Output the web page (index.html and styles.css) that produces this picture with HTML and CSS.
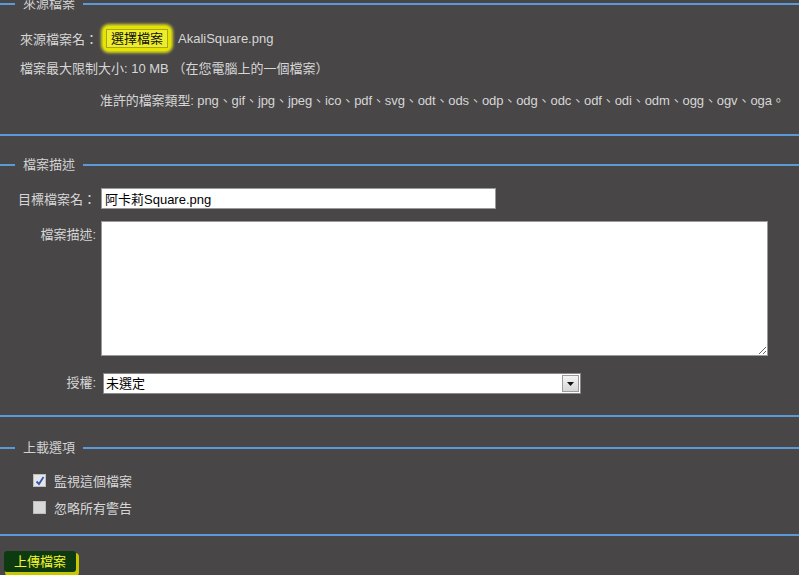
FILE: index.html
```html
<!DOCTYPE html>
<html lang="zh-Hant">
  <head>
    <meta charset="UTF-8">
    <title>上傳檔案</title>
    <link rel="stylesheet" href="styles.css">
  </head>
  <body>
    <div class="page">

      <fieldset class="box box-source">
        <legend>來源檔案</legend>
        <div class="row row-file">
          <span class="lbl">來源檔案名：</span>
          <span class="marker"><span class="pick">選擇檔案</span></span>
          <span class="fname">AkaliSquare.png</span>
        </div>
        <div class="row row-size">檔案最大限制大小: 10 MB （在您電腦上的一個檔案）</div>
        <div class="row row-types">准許的檔案類型: png、gif、jpg、jpeg、ico、pdf、svg、odt、ods、odp、odg、odc、odf、odi、odm、ogg、ogv、oga。</div>
      </fieldset>

      <fieldset class="box box-desc">
        <legend>檔案描述</legend>
        <div class="grid">
          <label class="glbl glbl-mid">目標檔案名：</label>
          <input class="target" type="text" value="阿卡莉Square.png">
          <label class="glbl glbl-top">檔案描述:</label>
          <textarea class="desc"></textarea>
          <label class="glbl glbl-mid">授權:</label>
          <div class="select">
            <span class="select-text">未選定</span>
            <span class="select-btn">
              <svg width="7" height="4" viewBox="0 0 7 4"><path d="M0 0h7L3.5 4z" fill="#111"/></svg>
            </span>
          </div>
        </div>
      </fieldset>

      <fieldset class="box box-opts">
        <legend>上載選項</legend>
        <div class="check">
          <span class="cb">
            <svg width="10" height="10" viewBox="0 0 10 10"><path d="M1.5 5.5l2.5 2.5 4.5-7" fill="none" stroke="#3457b8" stroke-width="1.8"/></svg>
          </span>
          <span>監視這個檔案</span>
        </div>
        <div class="check">
          <span class="cb cb-off"></span>
          <span>忽略所有警告</span>
        </div>
      </fieldset>

      <div class="submit-row">
        <span class="submit">上傳檔案</span>
      </div>

    </div>
  </body>
</html>
```

FILE: styles.css
```css
body {
  margin: 0;
  background: #ffffff;
  font-family: "Liberation Sans", "Noto Sans CJK TC", sans-serif;
  font-size: 13px;
  color: #d6d6d6;
}

.page {
  background: #484647;
  height: 575px;
  overflow: hidden;
}

.box {
  margin: 0;
  padding: 0;
  border: none;
  border-top: 2px solid #5a9ad9;
  border-bottom: 2px solid #5a9ad9;
}

.box legend {
  margin-left: 15px;
  padding: 0 8px;
  line-height: 16px;
  color: #d2d2d2;
}

.box-source {
  margin-top: -4px;
  padding-bottom: 25px;
}

.box-desc {
  margin-top: 21px;
  padding-bottom: 21px;
}

.box-opts {
  margin-top: 23px;
  padding-bottom: 13px;
}

.row {
  padding-left: 20px;
  white-space: nowrap;
}

.row-file {
  display: flex;
  align-items: center;
  margin-top: 15px;
  height: 22px;
}

.lbl {
  width: 83px;
}

.marker {
  background: #e4e400;
  border-radius: 6px;
  padding: 3px 3px;
  box-shadow: 0 0 3px 2px #d8d820;
}

.pick {
  display: inline-block;
  background: #eded2a;
  color: #111;
  border: 1px solid #a8a820;
  padding: 1px 4px;
  line-height: 15px;
}

.fname {
  margin-left: 7px;
}

.row-size {
  margin-top: 12px;
  line-height: 16px;
}

.row-types {
  margin-top: 16px;
  padding-left: 100px;
  line-height: 16px;
  letter-spacing: -0.1px;
}

.grid {
  display: grid;
  grid-template-columns: 96px auto;
  column-gap: 5px;
  row-gap: 12px;
  margin-top: 15px;
  justify-items: start;
}

.glbl {
  justify-self: end;
  color: #d6d6d6;
}

.glbl-mid {
  align-self: center;
}

.glbl-top {
  align-self: start;
  padding-top: 3px;
}

.target {
  box-sizing: border-box;
  width: 395px;
  height: 21px;
  margin: 0;
  padding: 0 3px;
  border: 1px solid #9a9a9a;
  background: #fff;
  font-family: "Liberation Sans", "Noto Sans CJK TC", sans-serif;
  font-size: 13px;
  color: #000;
}

.desc {
  box-sizing: border-box;
  width: 667px;
  height: 135px;
  margin: 0;
  border: 1px solid #9a9a9a;
  background: #fff;
}

.select {
  display: flex;
  box-sizing: border-box;
  width: 478px;
  height: 21px;
  margin-top: 5px;
  margin-left: 2px;
  border: 1px solid #8a8a8a;
  background: #fff;
  color: #000;
}

.select-text {
  flex: 1;
  padding-left: 2px;
  line-height: 19px;
}

.select-btn {
  display: flex;
  align-items: center;
  justify-content: center;
  width: 15px;
  margin: 1px;
  border: 1px solid #9c9c9c;
  background: linear-gradient(#f4f4f4, #d6d6d6);
}

.check {
  display: flex;
  align-items: center;
  gap: 8px;
  padding-left: 33px;
  height: 27px;
}

.box-opts legend + .check {
  margin-top: 11px;
}

.cb {
  display: flex;
  align-items: center;
  justify-content: center;
  width: 11px;
  height: 11px;
  background: #e6e6e6;
  border: 1px solid #bdbdbd;
}

.cb-off {
  background: #d8d8d8;
}

.submit-row {
  padding: 15px 0 0 4px;
}

.submit {
  display: inline-block;
  background: #0e3a12;
  color: #f6f62c;
  padding: 2px 10px;
  line-height: 17px;
  border-radius: 3px;
  box-shadow: 2px 3px 0 1px #c8c800;
}
```
